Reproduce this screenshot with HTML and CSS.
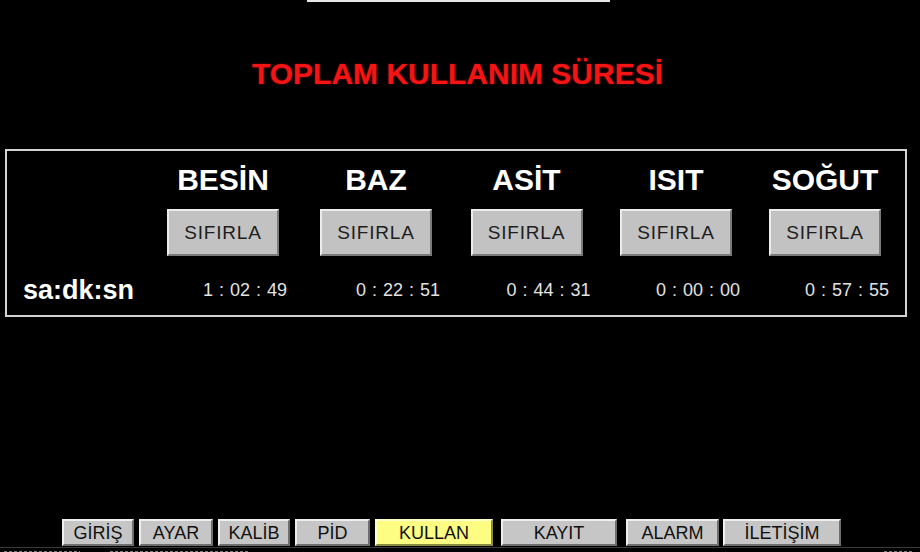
FILE: index.html
```html
<!DOCTYPE html>
<html lang="tr">
<head>
<meta charset="utf-8">
<title>Toplam Kullanım Süresi</title>
<link rel="stylesheet" href="styles.css">
</head>
<body>
<div class="screen">
  <div class="topbar"></div>
  <h1 class="title">TOPLAM KULLANIM SÜRESİ</h1>
  <div class="panel">
    <div class="cell"></div>
    <div class="cell head">BESİN</div>
    <div class="cell head">BAZ</div>
    <div class="cell head">ASİT</div>
    <div class="cell head">ISIT</div>
    <div class="cell head">SOĞUT</div>

    <div class="cell"></div>
    <div class="cell"><button class="reset">SIFIRLA</button></div>
    <div class="cell"><button class="reset">SIFIRLA</button></div>
    <div class="cell"><button class="reset">SIFIRLA</button></div>
    <div class="cell"><button class="reset">SIFIRLA</button></div>
    <div class="cell"><button class="reset">SIFIRLA</button></div>

    <div class="cell label">sa:dk:sn</div>
    <div class="cell time">1 : 02 : 49</div>
    <div class="cell time">0 : 22 : 51</div>
    <div class="cell time">0 : 44 : 31</div>
    <div class="cell time">0 : 00 : 00</div>
    <div class="cell time">0 : 57 : 55</div>
  </div>
  <nav class="nav">
    <button class="tab w-giris">GİRİŞ</button>
    <button class="tab w-ayar">AYAR</button>
    <button class="tab w-kalib">KALİB</button>
    <button class="tab w-pid">PİD</button>
    <button class="tab w-kullan active">KULLAN</button>
    <button class="tab w-kayit">KAYIT</button>
    <button class="tab w-alarm">ALARM</button>
    <button class="tab w-iletisim">İLETİŞİM</button>
  </nav>
  <div class="footer">
    <span class="frag f1"></span><span class="frag f2"></span><span class="frag f3"></span>
  </div>
</div>
</body>
</html>
```

FILE: styles.css
```css
html, body {
  margin: 0;
  padding: 0;
  background: #000;
}
.screen {
  width: 920px;
  height: 552px;
  overflow: hidden;
  background: #000;
  font-family: "Liberation Sans", Arial, sans-serif;
  color: #fff;
}
.topbar {
  margin-left: 307px;
  width: 303px;
  height: 2px;
  background: #e6e6e6;
}
.title {
  margin: 55px 0 0 0;
  padding-right: 5px;
  font-size: 30px;
  line-height: 34px;
  font-weight: bold;
  text-align: center;
  color: #f41414;
  text-shadow: 0 0 2px rgba(255, 0, 0, 0.6);
}
.panel {
  margin: 58px 0 0 5px;
  width: 902px;
  box-sizing: border-box;
  border: 2px solid #d4d4d4;
  padding: 12px 0 9px 0;
  display: grid;
  grid-template-columns: 139px 154px 152px 149px 150px 148px;
  grid-template-rows: 34px 59px 50px;
}
.cell {
  display: flex;
  align-items: center;
  justify-content: center;
}
.head {
  font-size: 30px;
  font-weight: bold;
  color: #fff;
}
.reset {
  align-self: flex-end;
  width: 112px;
  height: 47px;
  margin: 0;
  padding: 0;
  background: #c2c2c2;
  border-style: solid;
  border-width: 2px;
  border-color: #ececec #7a7a7a #7a7a7a #ececec;
  font-family: "Liberation Sans", Arial, sans-serif;
  font-size: 19px;
  letter-spacing: 0.8px;
  color: #1e1e1e;
}
.label {
  justify-content: flex-start;
  padding: 18px 0 0 16px;
  font-size: 27px;
  font-weight: bold;
  color: #fff;
}
.time {
  padding: 18px 0 0 44px;
  font-size: 18px;
  color: #e2e2e2;
  white-space: pre;
  word-spacing: 1px;
}
.nav {
  margin: 202px 0 0 62px;
  display: flex;
  gap: 5px;
  height: 27px;
}
.tab {
  margin: 0;
  padding: 0;
  height: 27px;
  background: #c6c6c6;
  border-style: solid;
  border-width: 2px;
  border-color: #efefef #6e6e6e #6e6e6e #efefef;
  font-family: "Liberation Sans", Arial, sans-serif;
  font-size: 18px;
  line-height: 22px;
  color: #111;
}
.tab.active {
  background: #fdfd84;
  border-color: #ffffc8 #8a8a40 #8a8a40 #ffffc8;
}
.w-giris { width: 72px; }
.w-ayar { width: 74px; }
.w-kalib { width: 72px; }
.w-pid { width: 75px; }
.w-kullan { width: 118px; }
.w-kayit { width: 116px; margin-left: 3px; }
.w-alarm { width: 93px; margin-left: 4px; }
.w-iletisim { width: 118px; margin-left: -1px; }
.footer {
  margin-top: 1px;
  height: 5px;
  border-top: 1px solid #3a3a3a;
  display: flex;
  align-items: flex-end;
}
.frag {
  height: 2px;
  background: repeating-linear-gradient(90deg, #7a7a7a 0 3px, transparent 3px 5px);
}
.f1 { width: 76px; margin-left: 4px; }
.f2 { width: 140px; margin-left: 30px; }
.f3 { width: 30px; margin-left: auto; margin-right: 6px; }
```
